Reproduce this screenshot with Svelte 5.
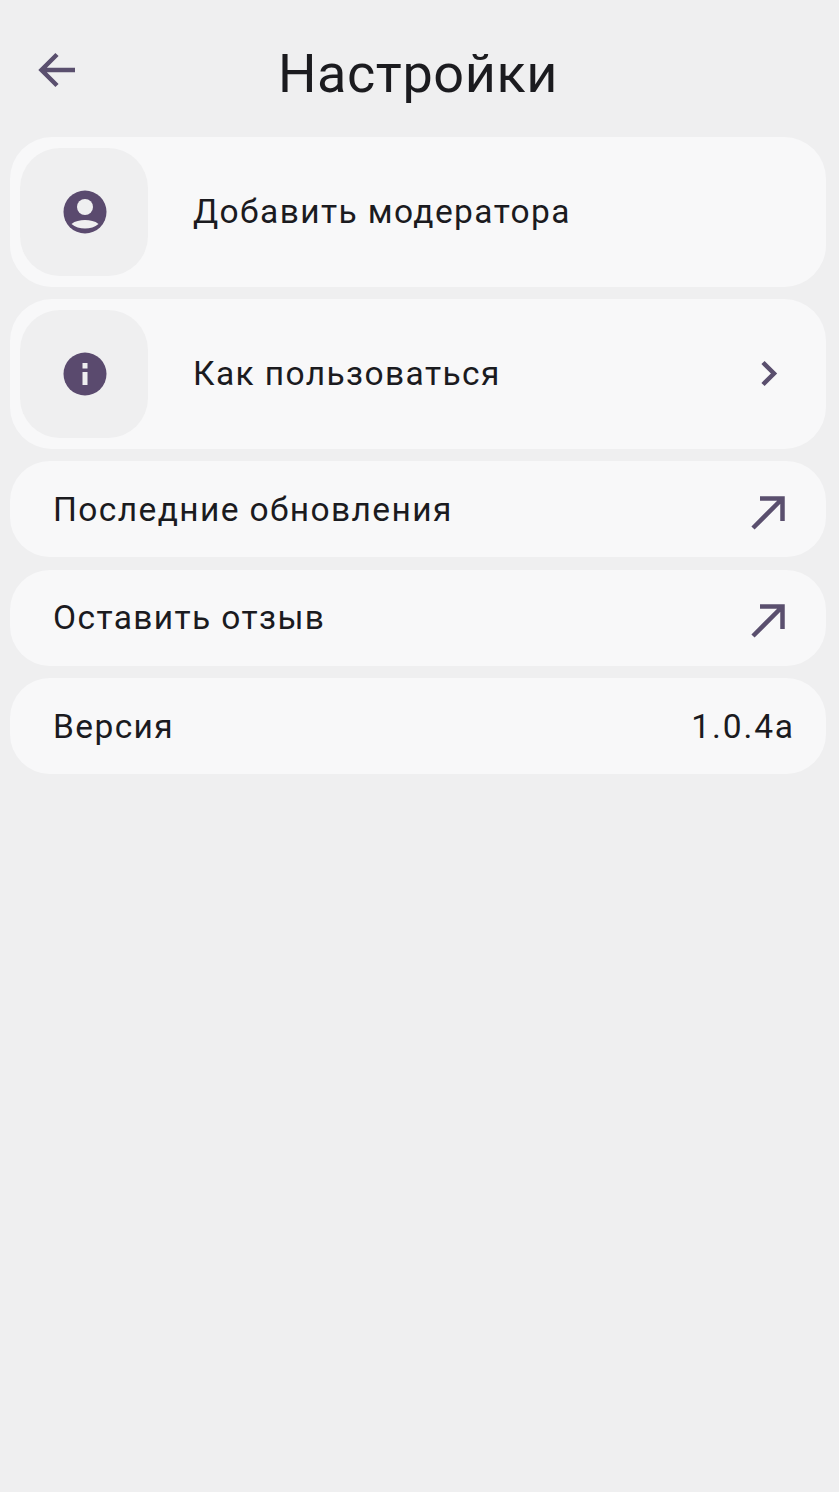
<script>
    const links = [
        { label: 'Последние обновления' },
        { label: 'Оставить отзыв' }
    ];
</script>

<div class="page">
    <header class="top">
        <button class="back" aria-label="Назад">
            <svg viewBox="0 0 40 40" width="40" height="40">
                <path d="M37 20H4M19 4.500 3.500 20 19 35.500" />
            </svg>
        </button>
        <h1>Настройки</h1>
    </header>

    <div class="list">
        <div class="card big">
            <div class="icon-box">
                <svg viewBox="0 0 44 44" width="44" height="44">
                    <circle class="solid" cx="22" cy="22" r="21.500" />
                    <circle class="cut" cx="22" cy="17" r="8" />
                    <path class="cut" d="M8.500 34C12 31 17 30 22 30S32 31 35.500 34C32 37 27 38.500 22 38.500S12 37 8.500 34Z" />
                </svg>
            </div>
            <span class="label">Добавить модератора</span>
        </div>

        <div class="card big">
            <div class="icon-box">
                <svg viewBox="0 0 44 44" width="44" height="44">
                    <circle class="solid" cx="22" cy="22" r="21.500" />
                    <rect class="cut" x="19.500" y="11" width="5" height="5.500" />
                    <rect class="cut" x="19.500" y="20" width="5" height="13" />
                </svg>
            </div>
            <span class="label">Как пользоваться</span>
            <svg class="chevron" viewBox="0 0 18 28" width="18" height="28">
                <path d="M3 2.500 14 13.500 3 24.500" />
            </svg>
        </div>

        {#each links as link}
            <div class="card small">
                <span class="label">{link.label}</span>
                <svg class="arrow" viewBox="0 0 36 36" width="36" height="36">
                    <path d="M10 3.500H32.500V26M32.500 3.500 3 33" />
                </svg>
            </div>
        {/each}

        <div class="card small">
            <span class="label">Версия</span>
            <span class="value">1.0.4a</span>
        </div>
    </div>
</div>

<style>
    :global(body) {
        background: #efeff0;
    }

    .page {
        min-height: 1492px;
        background: #efeff0;
        font-family: Roboto, sans-serif;
        color: #1b1b1f;
        padding: 0 13px 0 10px;
        box-sizing: border-box;
    }

    .top {
        height: 137px;
        display: flex;
        align-items: center;
        justify-content: center;
        position: relative;
    }

    h1 {
        margin: 9px 0 0;
        font-size: 54px;
        font-weight: 400;
        letter-spacing: 0.600px;
    }

    .back {
        position: absolute;
        left: 28px;
        top: 50px;
        padding: 0;
        border: 0;
        background: none;
        display: flex;
    }

    .back path,
    .chevron path,
    .arrow path {
        fill: none;
        stroke: #5a4f6e;
        stroke-width: 4.500;
    }

    .list {
        display: flex;
        flex-direction: column;
        gap: 12.500px;
    }

    .card {
        background: #f8f8f9;
        display: flex;
        align-items: center;
        box-sizing: border-box;
    }

    .big {
        height: 149.500px;
        border-radius: 42px;
        padding: 0 48px 0 10px;
    }

    .small {
        height: 96px;
        border-radius: 40px;
        padding: 0 33px 0 43px;
        justify-content: space-between;
    }

    .icon-box {
        width: 128px;
        height: 128px;
        border-radius: 40px;
        background: #efeff0;
        display: flex;
        align-items: center;
        justify-content: center;
        margin-right: 45px;
        flex: none;
    }

    .icon-box svg {
        margin-left: 1px;
    }

    .solid {
        fill: #5a4a6e;
    }

    .cut {
        fill: #efeff0;
    }

    .label,
    .value {
        font-size: 33.500px;
        letter-spacing: 1.400px;
        white-space: nowrap;
    }

    .value {
        letter-spacing: 1.900px;
        margin-right: -2px;
    }

    .chevron {
        margin-left: auto;
    }

    .arrow {
        margin-right: 7px;
        margin-top: 7px;
    }
</style>
